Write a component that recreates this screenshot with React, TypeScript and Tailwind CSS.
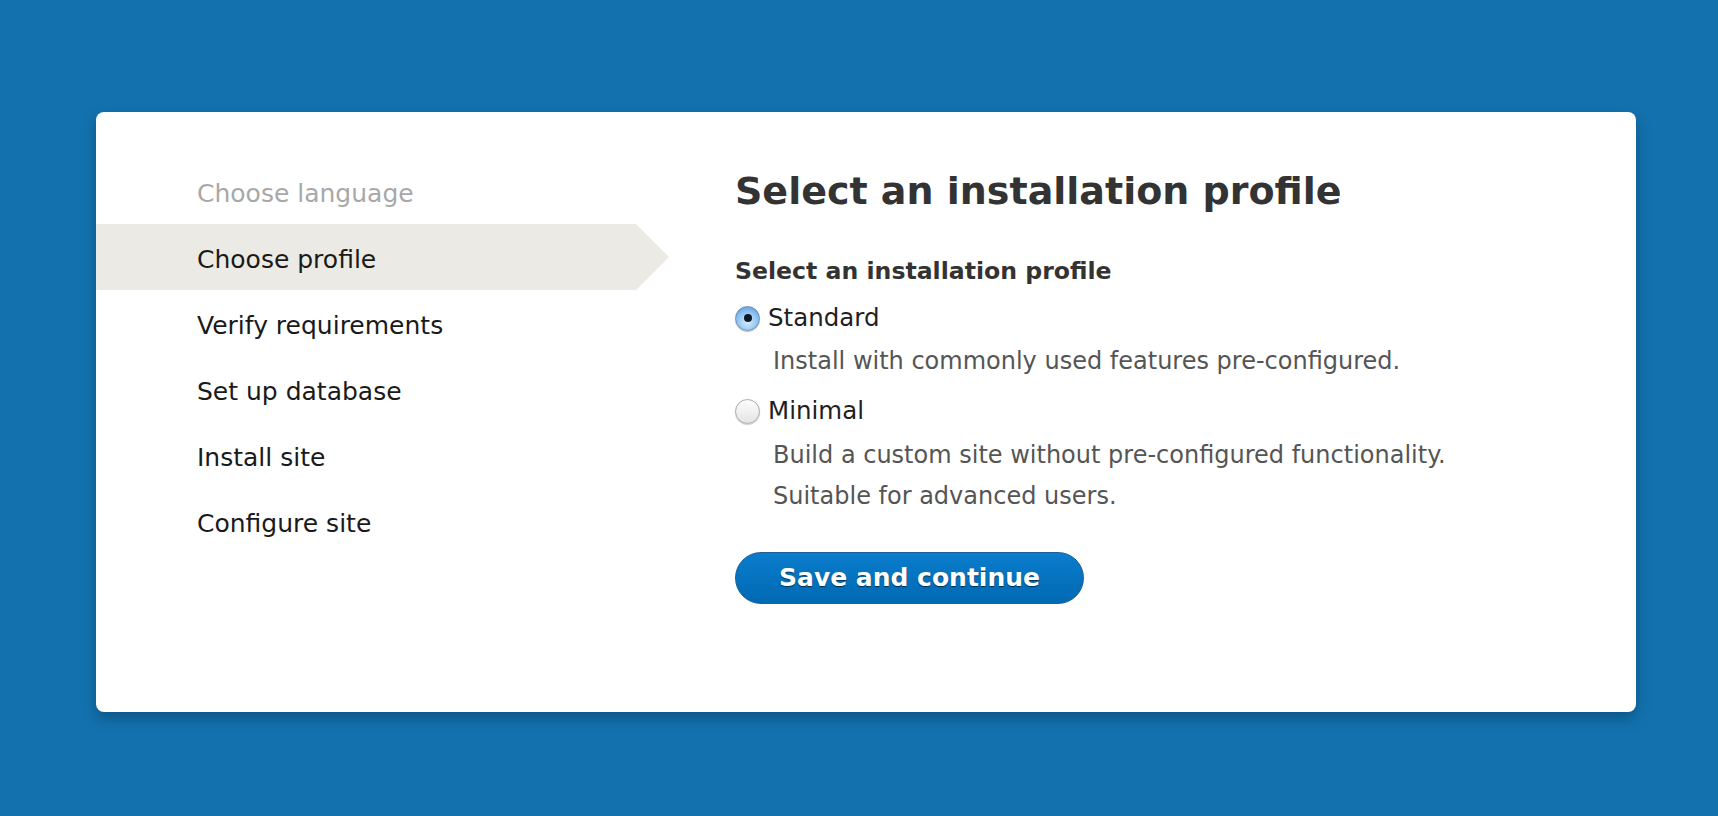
import { useState } from "react";

const steps = [
  { label: "Choose language", state: "done" },
  { label: "Choose profile", state: "active" },
  { label: "Verify requirements", state: "todo" },
  { label: "Set up database", state: "todo" },
  { label: "Install site", state: "todo" },
  { label: "Configure site", state: "todo" },
];

const profiles = [
  {
    id: "standard",
    name: "Standard",
    lines: ["Install with commonly used features pre-configured."],
  },
  {
    id: "minimal",
    name: "Minimal",
    lines: ["Build a custom site without pre-configured functionality.", "Suitable for advanced users."],
  },
];

function Radio({ checked }: { checked: boolean }) {
  return checked ? (
    <span className="flex h-[25px] w-[25px] shrink-0 items-center justify-center rounded-full border border-[#6d8fb3] bg-[radial-gradient(circle_at_50%_65%,#d6ecff_0%,#8cc2f0_55%,#4f8fd0_100%)] shadow-[0_1px_1px_rgba(0,0,0,0.25)]">
      <span className="h-[8px] w-[8px] rounded-full bg-[#0d1a26]" />
    </span>
  ) : (
    <span className="h-[25px] w-[25px] shrink-0 rounded-full border border-[#a9a9a9] bg-[linear-gradient(#fdfdfd,#e4e4e4)] shadow-[0_1px_1px_rgba(0,0,0,0.2)]" />
  );
}

export default function App() {
  const [profile, setProfile] = useState("standard");

  return (
    <div className="min-h-[816px] bg-[#1372ae] pt-[112px] font-['DejaVu_Sans',sans-serif]">
      <div className="ml-[96px] flex h-[600px] w-[1540px] rounded-[8px] bg-white shadow-[0_6px_14px_rgba(0,30,60,0.35)]">
        {/* steps */}
        <ul className="w-[540px] shrink-0 pt-[46px]">
          {steps.map((s) => (
            <li
              key={s.label}
              className={`relative flex h-[66px] items-center pl-[101px] pt-[5px] text-[25px] ${
                s.state === "done"
                  ? "text-[#a8a8a8]"
                  : s.state === "active"
                    ? "bg-[#ebeae5] text-[#1a1a1a]"
                    : "text-[#1a1a1a]"
              }`}
            >
              {s.label}
              {s.state === "active" && (
                <span className="absolute left-full top-0 h-0 w-0 border-y-[33px] border-l-[33px] border-y-transparent border-l-[#ebeae5]" />
              )}
            </li>
          ))}
        </ul>

        {/* form */}
        <div className="flex-1 pl-[99px] pt-[56px] text-[#333]">
          <h1 className="text-[38px] leading-[46px] font-bold text-[#333]">Select an installation profile</h1>
          <fieldset className="mt-[40px]">
            <legend className="text-[23.6px] leading-[34px] font-bold text-[#333]">Select an installation profile</legend>
            {profiles.map((p, i) => (
              <div key={p.id} className={i === 0 ? "mt-[10px]" : "mt-[9px]"}>
                <label
                  className="flex h-[40px] cursor-pointer items-center gap-[8px] text-[24.5px] text-[#1f1f1f]"
                  onClick={() => setProfile(p.id)}
                >
                  <Radio checked={profile === p.id} />
                  {p.name}
                </label>
                <div className="pl-[38px] pt-[3px] text-[24px] leading-[41.5px] text-[#555]">
                  {p.lines.map((l) => (
                    <div key={l}>{l}</div>
                  ))}
                </div>
              </div>
            ))}
          </fieldset>
          <button className="mt-[34px] h-[52px] w-[349px] rounded-full border border-[#1d5f96] bg-[linear-gradient(#0a7dcc,#0069b3)] text-[25px] font-bold text-white [text-shadow:0_1px_1px_rgba(0,0,0,0.6)]">
            Save and continue
          </button>
        </div>
      </div>
    </div>
  );
}
